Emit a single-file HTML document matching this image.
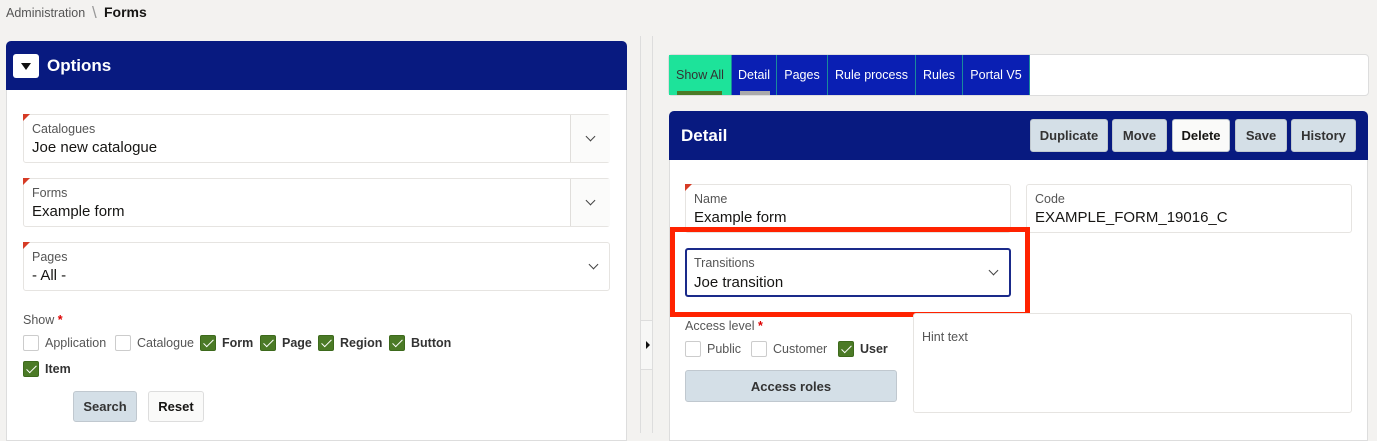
<!DOCTYPE html>
<html><head><style>
*{box-sizing:border-box;margin:0;padding:0}
body{width:1377px;height:433px;overflow:hidden;background:#f3f2f0;font-family:"Liberation Sans",sans-serif;position:relative;color:#161513}
.a{position:absolute}
.fld{position:absolute;background:#fff;border:1px solid #e6e4e1;border-radius:3px}
.fld .l{position:absolute;left:8px;top:7px;font-size:12.5px;color:#555}
.fld .v{position:absolute;left:8px;top:24px;font-size:15px;color:#161513}
.req::before{content:"";position:absolute;left:-1px;top:-1px;border-top:7px solid #d63b25;border-right:7px solid transparent}
.chev{position:absolute;width:7px;height:7px;border-right:1.3px solid #444;border-bottom:1.3px solid #444;transform:rotate(45deg)}
.cb{position:absolute;width:16px;height:16px;border:1px solid #ccc;border-radius:2px;background:#fff}
.cb.on{background:#4b7a26;border-color:#3d6a1c}
.cb.on::after{content:"";position:absolute;left:5px;top:1px;width:4px;height:9px;border-right:1.2px solid #fff;border-bottom:1.2px solid #fff;transform:rotate(45deg)}
.ct{position:absolute;font-size:12.5px;color:#555}
.ct.b{font-weight:bold;color:#333}
.btn{position:absolute;border:1px solid #c0c8cf;border-radius:3px;background:#d4dfe7;font-size:13px;font-weight:bold;color:#333;display:flex;align-items:center;justify-content:center}
.tab{position:absolute;top:55px;height:40px;background:#0a1fb3;color:#fff;font-size:12.5px;display:flex;align-items:center;justify-content:center;border-right:1px solid #1a8a9a}
</style></head><body>
<div class="a" style="left:6px;top:6px;font-size:12.5px;color:#555">Administration</div>
<div class="a" style="left:92px;top:3px;font-size:17px;color:#999">\</div>
<div class="a" style="left:104px;top:4px;font-size:14px;font-weight:bold">Forms</div>

<div class="a" style="left:6px;top:41px;width:621px;height:400px;background:#fff;border:1px solid #ddd;border-radius:5px 5px 0 0"></div>
<div class="a" style="left:6px;top:41px;width:621px;height:49px;background:#081a80;border-radius:5px 5px 0 0"></div>
<div class="a" style="left:13px;top:54px;width:26px;height:24px;background:#fff;border-radius:3px"></div>
<div class="a" style="left:21px;top:63px;border-top:7px solid #111;border-left:5px solid transparent;border-right:5px solid transparent"></div>
<div class="a" style="left:47px;top:56px;font-size:17px;font-weight:bold;color:#fff">Options</div>

<div class="fld req" style="left:23px;top:114px;width:587px;height:49px"><div class="l">Catalogues</div><div class="v">Joe new catalogue</div>
<div class="a" style="left:546px;top:0;width:40px;height:47px;border-left:1px solid #e0dedb;background:#fbfbfa"></div><div class="chev" style="left:563px;top:18px"></div></div>
<div class="fld req" style="left:23px;top:178px;width:587px;height:49px"><div class="l">Forms</div><div class="v">Example form</div>
<div class="a" style="left:546px;top:0;width:40px;height:47px;border-left:1px solid #e0dedb;background:#fbfbfa"></div><div class="chev" style="left:563px;top:18px"></div></div>
<div class="fld req" style="left:23px;top:242px;width:587px;height:49px"><div class="l">Pages</div><div class="v">- All -</div><div class="chev" style="left:566px;top:18px"></div></div>

<div class="ct" style="left:23px;top:313px">Show <span style="color:#d00;font-weight:bold">*</span></div>
<div class="cb" style="left:23px;top:335px"></div><div class="ct" style="left:45px;top:336px">Application</div>
<div class="cb" style="left:115px;top:335px"></div><div class="ct" style="left:137px;top:336px">Catalogue</div>
<div class="cb on" style="left:200px;top:335px"></div><div class="ct b" style="left:222px;top:336px">Form</div>
<div class="cb on" style="left:260px;top:335px"></div><div class="ct b" style="left:282px;top:336px">Page</div>
<div class="cb on" style="left:318px;top:335px"></div><div class="ct b" style="left:340px;top:336px">Region</div>
<div class="cb on" style="left:389px;top:335px"></div><div class="ct b" style="left:411px;top:336px">Button</div>
<div class="cb on" style="left:23px;top:361px"></div><div class="ct b" style="left:45px;top:362px">Item</div>
<div class="btn" style="left:73px;top:391px;width:64px;height:31px">Search</div>
<div class="btn" style="left:148px;top:391px;width:56px;height:31px;background:#fafaf9;border-color:#ddd;color:#161513">Reset</div>

<div class="a" style="left:640px;top:36px;width:1px;height:397px;background:#ddd"></div>
<div class="a" style="left:641px;top:320px;width:11px;height:50px;background:#f7f7f6;border-top:1px solid #ddd;border-bottom:1px solid #ddd"></div>
<div class="a" style="left:646px;top:341px;border-left:4px solid #111;border-top:4px solid transparent;border-bottom:4px solid transparent"></div>
<div class="a" style="left:652px;top:36px;width:1px;height:397px;background:#ddd"></div>

<div class="a" style="left:668px;top:54px;width:701px;height:42px;background:#fff;border:1px solid #ddd;border-radius:4px"></div>
<div class="tab" style="left:669px;width:63px;background:#1de39a;color:#333">Show All</div>
<div class="a" style="left:677px;top:91px;width:45px;height:4px;background:#4b7a26"></div>
<div class="tab" style="left:732px;width:45px">Detail</div>
<div class="a" style="left:740px;top:91px;width:30px;height:4px;background:#aaa"></div>
<div class="tab" style="left:777px;width:51px">Pages</div>
<div class="tab" style="left:828px;width:88px">Rule process</div>
<div class="tab" style="left:916px;width:47px">Rules</div>
<div class="tab" style="left:963px;width:67px">Portal V5</div>

<div class="a" style="left:669px;top:111px;width:699px;height:330px;background:#fff;border:1px solid #ddd;border-radius:5px 5px 0 0"></div>
<div class="a" style="left:669px;top:111px;width:699px;height:49px;background:#081a80;border-radius:5px 5px 0 0"></div>
<div class="a" style="left:681px;top:126px;font-size:17px;font-weight:bold;color:#fff">Detail</div>
<div class="btn" style="left:1030px;top:119px;width:78px;height:33px">Duplicate</div>
<div class="btn" style="left:1112px;top:119px;width:55px;height:33px">Move</div>
<div class="btn" style="left:1172px;top:119px;width:58px;height:33px;background:#fafaf9;color:#161513">Delete</div>
<div class="btn" style="left:1235px;top:119px;width:52px;height:33px">Save</div>
<div class="btn" style="left:1291px;top:119px;width:65px;height:33px">History</div>

<div class="fld req" style="left:685px;top:184px;width:326px;height:49px"><div class="l">Name</div><div class="v">Example form</div></div>
<div class="fld" style="left:1026px;top:184px;width:326px;height:49px"><div class="l">Code</div><div class="v">EXAMPLE_FORM_19016_C</div></div>

<div class="a" style="left:670px;top:227px;width:360px;height:90px;border:5px solid #ff2200"></div>
<div class="fld" style="left:685px;top:248px;width:326px;height:49px;border:2px solid #1a2a8a"><div class="l" style="left:7px;top:6px">Transitions</div><div class="v" style="left:7px;top:24px">Joe transition</div><div class="chev" style="left:303px;top:17px"></div></div>

<div class="ct" style="left:685px;top:319px">Access level <span style="color:#d00;font-weight:bold">*</span></div>
<div class="cb" style="left:685px;top:341px"></div><div class="ct" style="left:707px;top:342px">Public</div>
<div class="cb" style="left:751px;top:341px"></div><div class="ct" style="left:773px;top:342px">Customer</div>
<div class="cb on" style="left:838px;top:341px"></div><div class="ct b" style="left:860px;top:342px">User</div>
<div class="btn" style="left:685px;top:370px;width:212px;height:32px">Access roles</div>
<div class="fld" style="left:913px;top:313px;width:439px;height:100px"><div class="l" style="top:16px">Hint text</div></div>
</body></html>
